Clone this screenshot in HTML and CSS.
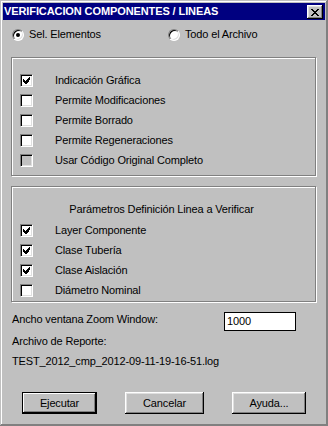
FILE: index.html
```html
<!DOCTYPE html>
<html lang="es">
<head>
<meta charset="utf-8">
<title>Verificacion</title>
<link rel="stylesheet" href="styles.css">
</head>
<body>
<div class="window">
  <div class="titlebar">
    <span class="title">VERIFICACION COMPONENTES / LINEAS</span>
    <span class="close"><svg width="8" height="7" viewBox="0 0 8 7" shape-rendering="crispEdges"><path d="M0 0h2v1h-2zM6 0h2v1h-2zM1 1h2v1h-2zM5 1h2v1h-2zM2 2h4v1h-4zM3 3h2v1h-2zM2 4h4v1h-4zM1 5h2v1h-2zM5 5h2v1h-2zM0 6h2v1h-2zM6 6h2v1h-2z" fill="#000"/></svg></span>
  </div>

  <div class="radios">
    <label class="radio-item first"><span class="radio on"></span>Sel. Elementos</label>
    <label class="radio-item"><span class="radio"></span>Todo el Archivo</label>
  </div>

  <div class="group g1">
    <div class="row"><span class="cb"><svg class="tick" width="7" height="7" viewBox="0 0 7 7" shape-rendering="crispEdges"><path d="M6 0h1v3h-1zM5 1h1v4h-1zM4 2h1v4h-1zM3 3h1v4h-1zM2 4h1v3h-1zM1 3h1v3h-1zM0 2h1v3h-1z" fill="#000"/></svg></span><span class="lbl">Indicación Gráfica</span></div>
    <div class="row"><span class="cb"></span><span class="lbl">Permite Modificaciones</span></div>
    <div class="row"><span class="cb"></span><span class="lbl">Permite Borrado</span></div>
    <div class="row"><span class="cb"></span><span class="lbl">Permite Regeneraciones</span></div>
    <div class="row"><span class="cb disabled"></span><span class="lbl">Usar Código Original Completo</span></div>
  </div>

  <div class="group g2">
    <div class="gtitle">Parámetros Definición Linea a Verificar</div>
    <div class="row"><span class="cb"><svg class="tick" width="7" height="7" viewBox="0 0 7 7" shape-rendering="crispEdges"><path d="M6 0h1v3h-1zM5 1h1v4h-1zM4 2h1v4h-1zM3 3h1v4h-1zM2 4h1v3h-1zM1 3h1v3h-1zM0 2h1v3h-1z" fill="#000"/></svg></span><span class="lbl">Layer Componente</span></div>
    <div class="row"><span class="cb"><svg class="tick" width="7" height="7" viewBox="0 0 7 7" shape-rendering="crispEdges"><path d="M6 0h1v3h-1zM5 1h1v4h-1zM4 2h1v4h-1zM3 3h1v4h-1zM2 4h1v3h-1zM1 3h1v3h-1zM0 2h1v3h-1z" fill="#000"/></svg></span><span class="lbl">Clase Tubería</span></div>
    <div class="row"><span class="cb"><svg class="tick" width="7" height="7" viewBox="0 0 7 7" shape-rendering="crispEdges"><path d="M6 0h1v3h-1zM5 1h1v4h-1zM4 2h1v4h-1zM3 3h1v4h-1zM2 4h1v3h-1zM1 3h1v3h-1zM0 2h1v3h-1z" fill="#000"/></svg></span><span class="lbl">Clase Aislación</span></div>
    <div class="row"><span class="cb"></span><span class="lbl">Diámetro Nominal</span></div>
  </div>

  <div class="zoomrow">
    <span class="zlabel">Ancho ventana Zoom Window:</span>
    <span class="field">1000</span>
  </div>
  <div class="line l1">Archivo de Reporte:</div>
  <div class="line l2">TEST_2012_cmp_2012-09-11-19-16-51.log</div>

  <div class="buttons">
    <button class="btn default b1">Ejecutar</button>
    <button class="btn b2">Cancelar</button>
    <button class="btn b3">Ayuda...</button>
  </div>
</div>
</body>
</html>
```

FILE: styles.css
```css
html, body {
  margin: 0;
  padding: 0;
  background: #c0c0c0;
}
body {
  font-family: "Liberation Sans", Arial, sans-serif;
  font-size: 11px;
  letter-spacing: -0.15px;
  color: #000;
}
.window {
  width: 328px;
  height: 426px;
  box-sizing: border-box;
  padding: 3px;
  background: #c0c0c0;
  box-shadow: inset -1px -1px #808080, inset 1px 1px #c0c0c0, inset -2px -2px #808080, inset 2px 2px #fff;
  display: flex;
  flex-direction: column;
}
.titlebar {
  height: 17px;
  flex: none;
  background: #000080;
  color: #fff;
  display: flex;
  align-items: flex-start;
  justify-content: space-between;
  padding: 0 2px 0 1px;
}
.title {
  font-weight: bold;
  letter-spacing: -0.1px;
  line-height: 17px;
}
.close {
  margin-top: 2px;
  width: 16px;
  height: 14px;
  box-sizing: border-box;
  background: #c0c0c0;
  box-shadow: inset -1px -1px #000, inset 1px 1px #fff, inset -2px -2px #808080, inset 2px 2px #dfdfdf;
  display: flex;
  align-items: center;
  justify-content: center;
}
.close svg { display: block; margin-left: -1px; }

.radios {
  display: flex;
  align-items: center;
  height: 13px;
  margin-top: 8px;
  padding-left: 9px;
  flex: none;
}
.radio-item {
  display: flex;
  align-items: center;
  line-height: 13px;
}
.radio-item.first { width: 156px; }
.radio {
  width: 12px;
  height: 12px;
  box-sizing: border-box;
  border-radius: 50%;
  border: 1px solid;
  border-color: #808080 #fff #fff #808080;
  background: #fff;
  box-shadow: inset 1px 1px #000, inset -1px -1px #dfdfdf;
  margin-right: 5px;
  position: relative;
}
.radio.on::after {
  content: "";
  position: absolute;
  left: 3px;
  top: 3px;
  width: 4px;
  height: 4px;
  border-radius: 50%;
  background: #000;
}

.group {
  flex: none;
  margin-left: 8px;
  width: 305px;
  box-sizing: border-box;
  border: 1px solid #808080;
  box-shadow: inset 1px 1px #fff, 1px 1px #fff;
  display: flex;
  flex-direction: column;
  padding-left: 8px;
}
.g1 {
  margin-top: 16px;
  height: 119px;
  padding-top: 12px;
}
.g2 {
  margin-top: 10px;
  height: 116px;
  padding-top: 15px;
}
.gtitle {
  line-height: 14px;
  height: 14px;
  text-align: center;
  padding-right: 12px;
  margin-bottom: 4px;
}
.row {
  height: 20px;
  display: flex;
  align-items: center;
}
.cb {
  width: 13px;
  height: 13px;
  box-sizing: border-box;
  border: 1px solid;
  border-color: #808080 #fff #fff #808080;
  box-shadow: inset 1px 1px #000, inset -1px -1px #dfdfdf;
  background: #fff;
  padding: 2px 0 0 2px;
  flex: none;
}
.cb.disabled { background: #c0c0c0; }
.tick { display: block; }
.lbl { margin-left: 22px; }

.zoomrow {
  flex: none;
  margin-top: 10px;
  height: 19px;
  padding-left: 9px;
  display: flex;
  align-items: flex-start;
}
.zlabel { line-height: 14px; }
.field {
  margin-left: auto;
  margin-right: 29px;
  width: 72px;
  height: 19px;
  box-sizing: border-box;
  border: 1px solid #000;
  background: #fff;
  padding-left: 2px;
  line-height: 17px;
}
.line {
  flex: none;
  padding-left: 9px;
  line-height: 14px;
  height: 14px;
}
.l1 { margin-top: 3px; }
.l2 { margin-top: 6px; }

.buttons {
  flex: none;
  display: flex;
  margin-top: 24px;
  padding-left: 19px;
}
.btn {
  font: inherit;
  letter-spacing: inherit;
  color: #000;
  height: 22px;
  padding: 0;
  border: none;
  background: #c0c0c0;
  box-shadow: inset -1px -1px #000, inset 1px 1px #fff, inset -2px -2px #808080, inset 2px 2px #dfdfdf;
  text-align: center;
}
.btn.default {
  border: 1px solid #000;
  box-shadow: inset -1px -1px #000, inset 1px 1px #fff, inset -2px -2px #808080;
}
.b1 { width: 75px; }
.b2 { width: 79px; margin-left: 28px; }
.b3 { width: 74px; margin-left: 28px; }
```
